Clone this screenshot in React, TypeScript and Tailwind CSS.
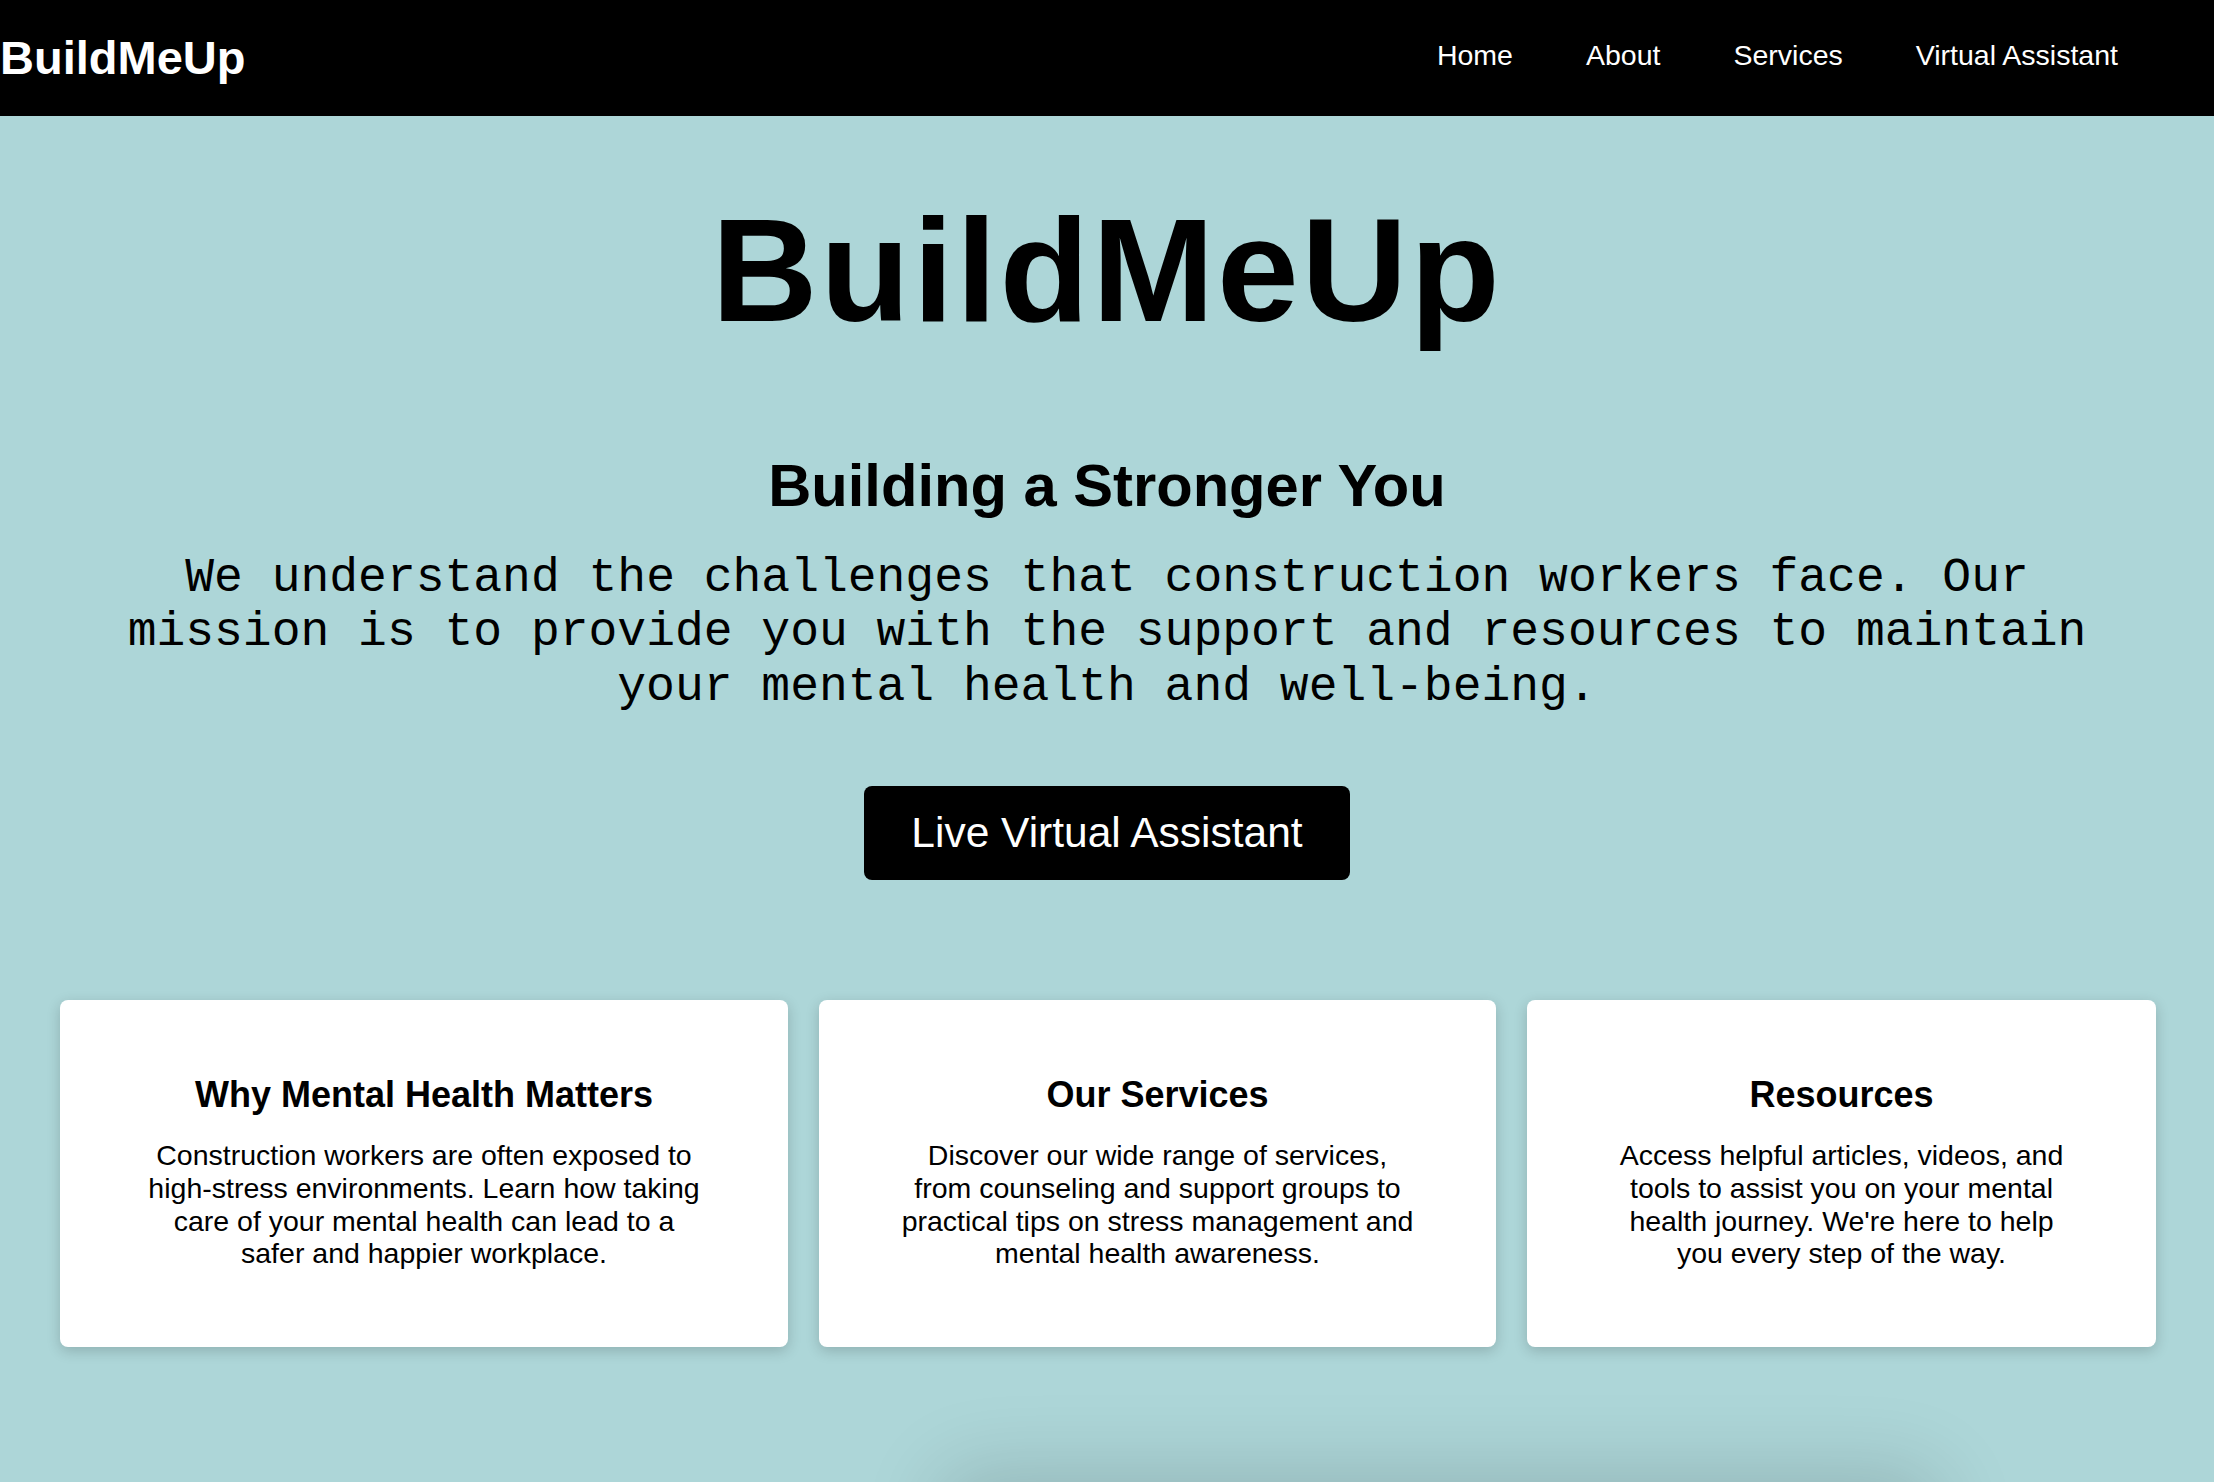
import React from "react";

const cards = [
  {
    title: "Why Mental Health Matters",
    body: "Construction workers are often exposed to high-stress environments. Learn how taking care of your mental health can lead to a safer and happier workplace.",
    width: "w-[728px]",
  },
  {
    title: "Our Services",
    body: "Discover our wide range of services, from counseling and support groups to practical tips on stress management and mental health awareness.",
    width: "w-[677px]",
  },
  {
    title: "Resources",
    body: "Access helpful articles, videos, and tools to assist you on your mental health journey. We're here to help you every step of the way.",
    width: "w-[629px]",
  },
];

export default function App() {
  return (
    <div className="min-h-[1482px] bg-[#add6d8] font-['Liberation_Sans',Arial,sans-serif] text-black overflow-hidden">
      {/* Top nav */}
      <nav className="flex h-[116px] items-center justify-between bg-black pr-[96px] text-white">
        <div className="mb-[2px] text-[47px] font-bold leading-none">BuildMeUp</div>
        <ul className="mb-[5px] flex items-center gap-[73px] text-[28.5px] leading-none">
          <li>Home</li>
          <li>About</li>
          <li>Services</li>
          <li>Virtual Assistant</li>
        </ul>
      </nav>

      {/* Hero */}
      <section className="flex flex-col items-center px-[100px] pt-[81px] text-center">
        <h1 className="text-[147px] font-bold leading-none tracking-[2.6px]">BuildMeUp</h1>
        <h2 className="mt-[112px] text-[59.7px] font-bold leading-none">Building a Stronger You</h2>
        <p className="mt-[35px] font-['Liberation_Mono','Courier_New',monospace] text-[48px] leading-[54.4px]">
          We understand the challenges that construction workers face. Our mission is to provide you with the support and resources to maintain your mental health and well-being.
        </p>
        <button className="mt-[72px] flex h-[94px] items-center rounded-[8px] bg-black px-[47px] text-[42.5px] leading-none text-white">
          Live Virtual Assistant
        </button>
      </section>

      {/* Info cards */}
      <section className="mt-[120px] flex gap-[31px] pl-[60px]">
        {cards.map((c) => (
          <div
            key={c.title}
            className={`${c.width} h-[347px] rounded-[8px] bg-white px-[80px] pt-[74px] text-center shadow-[0_4px_14px_rgba(0,0,0,0.18)]`}
          >
            <h3 className="text-[36px] font-bold leading-[41px]">{c.title}</h3>
            <p className="mt-[24px] text-[28.5px] leading-[32.8px]">{c.body}</p>
          </div>
        ))}
      </section>

      {/* next section peeking below the fold */}
      <div className="ml-[960px] mt-[143px] h-[200px] w-[960px] rounded-[12px] bg-[#add6d8] shadow-[0_0_80px_20px_rgba(0,0,0,0.15)]" />
    </div>
  );
}
